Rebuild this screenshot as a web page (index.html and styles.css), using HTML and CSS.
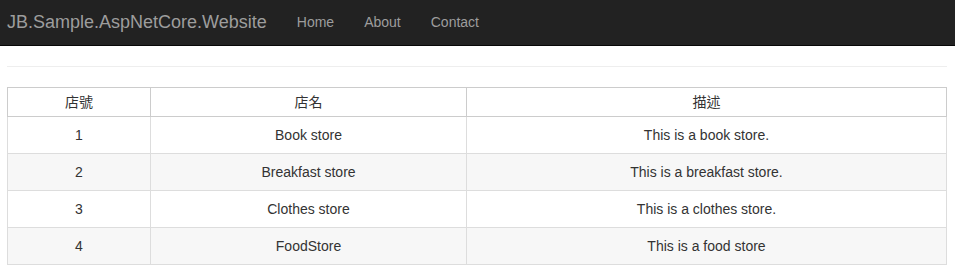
FILE: index.html
```html
<!DOCTYPE html>
<html>
<head>
  <title>JB.Sample.AspNetCore.Website</title>
  <link rel="stylesheet" href="styles.css">
</head>
<body>

  <div class="navbar">
    <a class="brand" href="#">JB.Sample.AspNetCore.Website</a>
    <ul class="nav">
      <li><a href="#">Home</a></li>
      <li><a href="#">About</a></li>
      <li><a href="#">Contact</a></li>
    </ul>
  </div>

  <div class="container">
    <hr>
    <table class="store-table">
      <colgroup>
        <col class="col-id">
        <col class="col-name">
        <col class="col-desc">
      </colgroup>
      <thead>
        <tr>
          <th>店號</th>
          <th>店名</th>
          <th>描述</th>
        </tr>
      </thead>
      <tbody>
        <tr>
          <td>1</td>
          <td>Book store</td>
          <td>This is a book store.</td>
        </tr>
        <tr>
          <td>2</td>
          <td>Breakfast store</td>
          <td>This is a breakfast store.</td>
        </tr>
        <tr>
          <td>3</td>
          <td>Clothes store</td>
          <td>This is a clothes store.</td>
        </tr>
        <tr>
          <td>4</td>
          <td>FoodStore</td>
          <td>This is a food store</td>
        </tr>
      </tbody>
    </table>
  </div>

</body>
</html>
```

FILE: styles.css
```css
body {
    font-family: 'Liberation Sans', Arial, 'Noto Sans CJK TC', sans-serif;
    font-size: 14px;
    line-height: 20px;
    margin: 0;
    padding: 0;
    background-color: #ffffff;
    color: #333333;
}

.navbar {
    display: flex;
    align-items: center;
    height: 43px;
    padding-bottom: 2px;
    background-color: #222222;
    border-bottom: 1px solid #080808;
}

.brand {
    padding: 0 15px 0 7px;
    font-size: 18px;
    color: #9d9d9d;
    text-decoration: none;
}

.nav {
    display: flex;
    list-style: none;
    margin: 0;
    padding: 0;
}

.nav a {
    display: block;
    padding: 0 15px;
    color: #9d9d9d;
    text-decoration: none;
}

.container {
    padding: 0 8px 0 7px;
}

hr {
    margin: 20px 0;
    border: 0;
    border-top: 1px solid #eeeeee;
}

.store-table {
    width: 100%;
    border-collapse: collapse;
    table-layout: fixed;
    border: 1px solid #cccccc;
}

.col-id {
    width: 143px;
}

.col-name {
    width: 316px;
}

.store-table th,
.store-table td {
    text-align: center;
    font-weight: normal;
    border: 1px solid #dddddd;
}

.store-table th {
    padding: 4px 8px;
    border-color: #cccccc;
}

.store-table td {
    padding: 8px;
}

.store-table tbody tr:nth-child(odd) {
    background-color: #ffffff;
}

.store-table tbody tr:nth-child(even) {
    background-color: #f7f7f7;
}
```
